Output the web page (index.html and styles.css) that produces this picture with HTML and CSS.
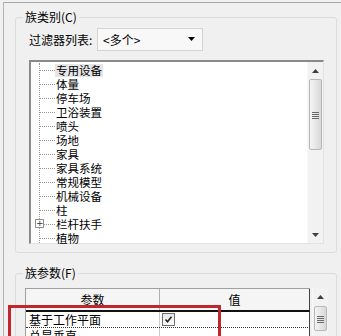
FILE: index.html
```html
<!DOCTYPE html>
<html lang="zh">
<head>
<meta charset="utf-8">
<link rel="stylesheet" href="styles.css">
</head>
<body>
<div class="win">
  <div class="group group-cat">
    <span class="legend">族类别(C)</span>
    <div class="filter-row">
      <span class="filter-label">过滤器列表:</span>
      <div class="combo">
        <span class="combo-text">&lt;多个&gt;</span>
        <svg class="combo-arrow" width="8" height="5" viewBox="0 0 8 5"><path d="M0 0H7L3.5 4Z" fill="#000"/></svg>
      </div>
    </div>
    <div class="listbox">
      <div class="tree">
        <div class="tree-line"></div>
        <div class="item sel"><span class="dash"></span><span class="txt">专用设备</span></div>
        <div class="item"><span class="dash"></span><span class="txt">体量</span></div>
        <div class="item"><span class="dash"></span><span class="txt">停车场</span></div>
        <div class="item"><span class="dash"></span><span class="txt">卫浴装置</span></div>
        <div class="item"><span class="dash"></span><span class="txt">喷头</span></div>
        <div class="item"><span class="dash"></span><span class="txt">场地</span></div>
        <div class="item"><span class="dash"></span><span class="txt">家具</span></div>
        <div class="item"><span class="dash"></span><span class="txt">家具系统</span></div>
        <div class="item"><span class="dash"></span><span class="txt">常规模型</span></div>
        <div class="item"><span class="dash"></span><span class="txt">机械设备</span></div>
        <div class="item"><span class="dash"></span><span class="txt">柱</span></div>
        <div class="item"><span class="plus">+</span><span class="dash"></span><span class="txt">栏杆扶手</span></div>
        <div class="item"><span class="dash"></span><span class="txt">植物</span></div>
      </div>
      <div class="vscroll">
        <div class="sbtn"><svg width="7" height="4" viewBox="0 0 7 4"><path d="M3.5 0L7 4H0Z" fill="#404040"/></svg></div>
        <div class="thumb"><span class="grip"></span></div>
        <div class="track"></div>
        <div class="sbtn"><svg width="7" height="4" viewBox="0 0 7 4"><path d="M0 0H7L3.5 4Z" fill="#404040"/></svg></div>
      </div>
    </div>
  </div>

  <div class="group group-param">
    <span class="legend">族参数(F)</span>
    <div class="table-wrap">
      <div class="table">
        <div class="thead">
          <div class="th th1">参数</div>
          <div class="th th2">值</div>
        </div>
        <div class="row focus">
          <div class="td td1">基于工作平面</div>
          <div class="td td2"><span class="check"><svg width="9" height="9" viewBox="0 0 9 9"><path d="M1.5 4.5L3.5 6.8L7.5 1.8" stroke="#222" stroke-width="1.6" fill="none"/></svg></span></div>
        </div>
        <div class="row">
          <div class="td td1">总是垂直</div>
          <div class="td td2"></div>
        </div>
      </div>
      <div class="vscroll small">
        <div class="sbtn"><svg width="7" height="4" viewBox="0 0 7 4"><path d="M3.5 0L7 4H0Z" fill="#404040"/></svg></div>
        <div class="thumb"><span class="grip"></span></div>
      </div>
    </div>
  </div>
  <div class="highlight"></div>
</div>
</body>
</html>
```
FILE: styles.css
```css
* { box-sizing: border-box; }
html, body {
  margin: 0;
  padding: 0;
  width: 341px;
  height: 336px;
  overflow: hidden;
  background: #f0f0f0;
  font-family: "Noto Sans CJK SC", "Noto Sans", sans-serif;
  font-size: 12px;
  color: #000;
}
.win {
  position: relative;
  margin: 2px 0 0 3px;
  height: 334px;
  overflow: hidden;
  border-top: 1px solid #a9a9a9;
  border-left: 1px solid #b4b4b4;
  padding: 14px 0 0 11px;
}
.group {
  position: relative;
  border: 1px solid #dcdcdc;
  border-radius: 3px;
  width: 322px;
}
.legend {
  position: absolute;
  left: 7px;
  top: -9px;
  line-height: 16px;
  padding: 0 2px;
  background: #f0f0f0;
}
.group-cat {
  height: 236px;
  padding: 10px 0 0 13px;
}
.filter-row {
  display: flex;
  align-items: center;
  height: 23px;
}
.filter-label {
  width: 68px;
}
.combo {
  width: 106px;
  height: 23px;
  border: 1px solid #d4d4d4;
  background: #f8f8f8;
  display: flex;
  align-items: center;
  justify-content: space-between;
  padding: 0 6px 0 5px;
}
.combo-text { line-height: 16px; }
.listbox {
  margin-top: 9px;
  width: 295px;
  height: 184px;
  background: #fff;
  border-top: 2px solid #8a8a8a;
  border-left: 2px solid #8a8a8a;
  border-right: 1px solid #e2e2e2;
  border-bottom: 1px solid #e2e2e2;
  display: flex;
}
.tree {
  position: relative;
  flex: 1;
  padding-top: 1px;
  font-size: 11.5px;
}
.tree-line {
  position: absolute;
  left: 8px;
  top: 1px;
  bottom: 0;
  border-left: 1px dotted #999;
}
.item {
  position: relative;
  height: 14px;
  display: flex;
  align-items: center;
  padding-left: 9px;
}
.dash {
  width: 15px;
  border-top: 1px dotted #999;
}
.txt {
  line-height: 13px;
  padding: 0 1px;
}
.item.sel .txt { background: #e6e6e6; }
.plus {
  position: absolute;
  left: 4px;
  top: 2px;
  width: 9px;
  height: 9px;
  border: 1px solid #919191;
  background: #fff;
  font-size: 9px;
  line-height: 7px;
  text-align: center;
  color: #333;
  font-family: "DejaVu Sans", sans-serif;
}
.vscroll {
  width: 16px;
  display: flex;
  flex-direction: column;
  background: #f2f2f2;
  border-left: 1px solid #f8f8f8;
}
.sbtn {
  height: 17px;
  display: flex;
  align-items: center;
  justify-content: center;
}
.thumb {
  height: 71px;
  margin: 0 1px;
  border: 1px solid #b8b8b8;
  border-radius: 2px;
  background: linear-gradient(to right, #f4f4f4, #e4e4e4 60%, #d8d8d8);
  display: flex;
  align-items: center;
  justify-content: center;
}
.grip {
  width: 7px;
  height: 7px;
  background: repeating-linear-gradient(to bottom, #6a6a6a 0 1px, transparent 1px 2px);
  margin-top: 1px;
}
.track { flex: 1; }
.group-param {
  margin-top: 20px;
  height: 80px;
  padding: 14px 0 0 9px;
}
.table-wrap {
  display: flex;
  gap: 2px;
}
.table {
  width: 285px;
  border-top: 1px solid #a0a0a0;
  border-left: 1px solid #a0a0a0;
  background: #fff;
}
.thead {
  display: flex;
  height: 23px;
  background: #f5f5f5;
  border-bottom: 2px solid #111;
  border-right: 1px solid #444;
}
.th {
  display: flex;
  align-items: center;
  justify-content: center;
  line-height: 16px;
}
.th1 { width: 134px; border-right: 1px solid #b0b0b0; }
.th2 { flex: 1; }
.row {
  display: flex;
  height: 16px;
  border-bottom: 1px dotted #333;
  border-right: 1px solid #444;
}
.td { line-height: 15px; }
.td1 { width: 134px; padding-left: 3px; border-right: 1px solid #ccc; }
.td2 { flex: 1; padding-left: 2px; display: flex; align-items: center; }
.check {
  width: 13px;
  height: 13px;
  border: 1px solid #707070;
  background: linear-gradient(#e8e8e8, #fafafa);
  display: flex;
  align-items: center;
  justify-content: center;
}
.vscroll.small {
  height: 60px;
  width: 16px;
}
.vscroll.small .thumb { height: 25px; margin-top: 1px; }
.highlight {
  position: absolute;
  left: 4px;
  top: 302px;
  width: 213px;
  height: 44px;
  border: 3px solid #c0262b;
}
```
